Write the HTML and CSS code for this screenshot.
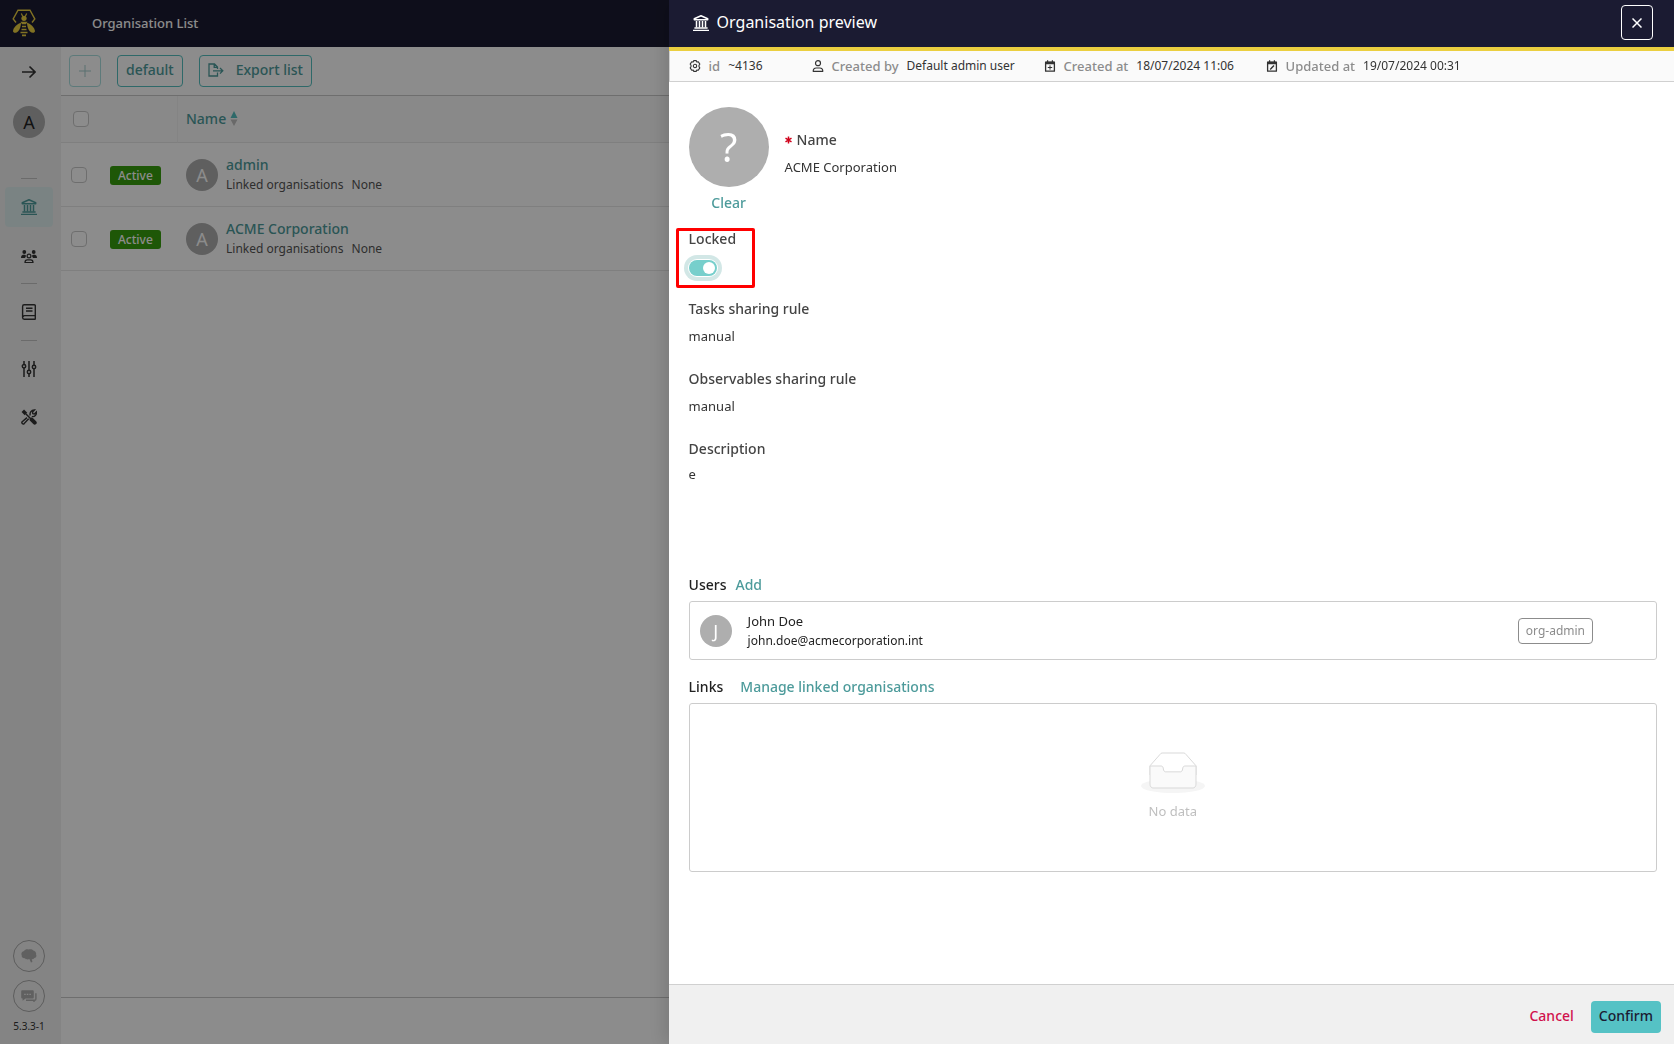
FILE: index.html
```html
<!DOCTYPE html>
<html lang="en">
<head>
<meta charset="utf-8">
<meta name="viewport" content="width=device-width, initial-scale=1">
<title>Organisation List</title>
<link rel="stylesheet" href="styles.css">
</head>
<body>
<svg class="sprite" aria-hidden="true">
  <symbol id="i-bank" viewBox="0 0 16 16">
    <path d="M8 .8 1.300 3.800v1h13.400v-1Z" fill="none" stroke="currentColor" stroke-width="1.500" stroke-linejoin="round"/>
    <path d="M3.500 6v6.500M6.500 6v6.500M9.500 6v6.500M12.500 6v6.500" stroke="currentColor" stroke-width="1.500"/>
    <path d="M1.400 13h13.200M0 15.300h16" stroke="currentColor" stroke-width="1.300"/>
  </symbol>
  <symbol id="i-calendar" viewBox="0 0 12 12">
    <path d="M1.600 2.200h8.800v9H1.600Z" fill="none" stroke="currentColor" stroke-width="1.300" stroke-linejoin="round"/>
    <path d="M1.400 1.800h9.200v2.400H1.400ZM3 .2h1.200v2H3ZM7.800.2H9v2H7.800Z" fill="currentColor"/>
  </symbol>
</svg>

<div class="app">
  <header class="topbar">
    <a class="logo" href="#" aria-label="Home">
      <svg width="24" height="28" viewBox="0 0 24 28" fill="none" stroke="currentColor" stroke-width="1.400">
        <path d="M4 13.500 1.200 10 6 1.200h12L22.800 10 20 13.500"/>
        <path d="m9.300 4.500 1.500 3m3.900-3-1.500 3" stroke-width="1.200"/>
        <circle cx="12" cy="9.300" r="2.600" fill="currentColor" stroke="none"/>
        <path d="M8.500 12.800h7l-1.500 2.400h-4Z" fill="currentColor" stroke="none"/>
        <path d="M9 13.800C5 15 1.500 18.500 1 22c0 2 3 2.500 5 .5 2-2 3-5.700 3-8.700ZM15 13.800c4 1.200 7.500 4.700 8 8.200 0 2-3 2.500-5 .5-2-2-3-5.700-3-8.700Z" fill="currentColor" stroke="none"/>
        <path d="M10 17.500h4M9.500 20.500h5M8.500 23.500h7M10 26.300h4" stroke-width="1.700"/>
      </svg>
    </a>
    <h1 class="topbar-title">Organisation List</h1>
  </header>

  <div class="workspace">
    <nav class="sidebar" aria-label="Main">
      <button class="side-item expand" type="button" aria-label="Expand menu">
        <svg width="14" height="14" viewBox="0 0 14 14" fill="none" stroke="currentColor" stroke-width="1.600"><path d="M0 7h13M7.500 1.500 13 7l-5.500 5.500"/></svg>
      </button>
      <span class="avatar avatar-me">A</span>
      <hr class="side-rule first">
      <a class="side-item active" href="#" aria-label="Organisations"><svg width="16" height="16"><use href="#i-bank"/></svg></a>
      <a class="side-item users" href="#" aria-label="Users">
        <svg width="16" height="14" viewBox="0 0 16 14" fill="currentColor">
          <circle cx="3.300" cy="2" r="1.900"/><circle cx="12.700" cy="2" r="1.900"/>
          <path d="M0 8c0-2 1-3.200 2.800-3.200 1.200 0 2.200.4 2.200 1.200L4 8ZM16 8c0-2-1-3.200-2.800-3.200-1.200 0-2.200.4-2.200 1.200l1 2Z"/>
          <circle cx="8" cy="6" r="1.900" fill="none" stroke="currentColor" stroke-width="1.200"/>
          <path d="M4 12.500c0-2 1-2.700 2.300-2.700h3.400c1.300 0 2.300.7 2.300 2.700Z" fill="none" stroke="currentColor" stroke-width="1.200"/>
        </svg>
      </a>
      <hr class="side-rule">
      <a class="side-item mid" href="#" aria-label="Templates">
        <svg width="16" height="16" viewBox="0 0 16 16" fill="none" stroke="currentColor" stroke-width="1.400">
          <path d="M14.300 11.500V1.800c0-.6-.4-1-1-1H3.200C2.200.8 1.600 1.500 1.600 2.500v11c0 1 .6 1.700 1.600 1.700h11.500M2 12.600c.3-.7 1-1 1.700-1h10.600v3.500M5 4.200h6.500M5 7h6.500"/>
        </svg>
      </a>
      <hr class="side-rule">
      <a class="side-item mid" href="#" aria-label="Entities">
        <svg width="16" height="16" viewBox="0 0 16 16" fill="none" stroke="currentColor" stroke-width="1.500">
          <path d="M3 0v3.500M3 7v9M8 0v9M8 13v3M13 0v4M13 8v8"/><circle cx="3" cy="5.200" r="1.700"/><circle cx="8" cy="11" r="1.700"/><circle cx="13" cy="6" r="1.700"/>
        </svg>
      </a>
      <a class="side-item" href="#" aria-label="Platform management">
        <svg width="16" height="16" viewBox="0 0 16 16" fill="none" stroke="currentColor">
          <path d="M1.800 1.800 5 5" stroke-width="3.500"/><path d="m5 5 5 5" stroke-width="1.500"/><path d="m10.700 10.700 3 3" stroke-width="4" stroke-linecap="round"/>
          <path d="m6 8.600-4.800 4.200c-1 1 .6 3 2 1.800l4.500-4.800M9.200 6.500c-.7-2.700 1-5.600 4.300-5.500l-2 2 .3 1.600 1.600.3 2-2c.4 3-1.700 5.200-4.600 4.600" stroke-width="1.400"/>
        </svg>
      </a>
      <div class="side-foot">
        <button class="round" type="button" aria-label="Insights">
          <svg width="16" height="14" viewBox="0 0 16 14" fill="currentColor"><path d="M3 2C4 .5 6 0 7.500.6 9-.3 11.500.2 12.300 1.500 14.500 2 15.600 4 15 5.500c1 1.500.2 3.300-1.600 3.500-.8 1-1.800 1.300-2.600 1.100l.6 3-1.400.4-1.600-3.400C6.500 10.800 4.500 10.500 4 9.300 1.800 9.600.3 8.200.8 6.400-.3 4.500.8 2.500 3 2Z"/></svg>
        </button>
        <button class="round" type="button" aria-label="Messages">
          <svg width="16" height="12" viewBox="0 0 16 12"><path d="M1.500.3h10c.8 0 1.300.5 1.300 1.200v5.700c0 .8-.5 1.300-1.300 1.300H4.600l-3 2.200V8.500C.7 8.500.2 8 .2 7.200V1.500C.2.800.7.300 1.500.300Z" fill="currentColor"/><path d="M5 10.200h8.500c.8 0 1.400-.5 1.400-1.300V3.200M13 10v2" fill="none" stroke="currentColor" stroke-width="1.400"/><path d="M3.200 4.400h1.500M5.800 4.400h1.500M8.400 4.400h1.500" stroke="#f0f0f0" stroke-width="1.400"/></svg>
        </button>
        <span class="version">5.3.3-1</span>
      </div>
    </nav>

    <main class="content">
      <div class="toolbar">
        <button class="btn square" type="button" aria-label="Add organisation" disabled>
          <svg width="12" height="12" viewBox="0 0 12 12" stroke="currentColor" stroke-width="1"><path d="M6 0v12M0 6h12"/></svg>
        </button>
        <button class="btn" type="button">default</button>
        <button class="btn export" type="button">
          <svg width="16" height="14" viewBox="0 0 16 14" fill="none" stroke="currentColor" stroke-width="1.300"><path d="M9.500 9.500V13H1V1h5.500l3 3v2M6.200 1v3.400h3M5 7.800h9.500M12 5l2.800 2.800L12 10.600"/></svg>
          Export list
        </button>
      </div>
      <table class="orgs">
        <thead>
          <tr>
            <th class="c-check"><input class="tick" type="checkbox" aria-label="Select all"></th>
            <th class="c-status"></th>
            <th class="c-name" scope="col"><span class="sort">Name
              <svg width="8" height="16" viewBox="0 0 8 16"><path d="M4 0 7.500 7h-7Z" fill="#55c0c0"/><path d="M4 15 7.500 8.500h-7Z" fill="#bfbfbf"/></svg></span></th>
          </tr>
        </thead>
        <tbody>
          <tr>
            <td class="c-check"><input class="tick" type="checkbox" aria-label="Select admin"></td>
            <td class="c-status"><span class="tag">Active</span></td>
            <td class="c-name"><div class="org"><span class="avatar">A</span><div><a class="org-name" href="#">admin</a><p class="org-links"><span>Linked organisations</span><span>None</span></p></div></div></td>
          </tr>
          <tr>
            <td class="c-check"><input class="tick" type="checkbox" aria-label="Select ACME Corporation"></td>
            <td class="c-status"><span class="tag">Active</span></td>
            <td class="c-name"><div class="org"><span class="avatar">A</span><div><a class="org-name" href="#">ACME Corporation</a><p class="org-links"><span>Linked organisations</span><span>None</span></p></div></div></td>
          </tr>
        </tbody>
      </table>
      <footer class="list-foot"></footer>
    </main>
  </div>
</div>

<div class="mask"></div>

<aside class="drawer" role="dialog" aria-labelledby="drawer-title">
  <header class="drawer-head">
    <svg width="16" height="16"><use href="#i-bank"/></svg>
    <h2 id="drawer-title">Organisation preview</h2>
    <button class="close" type="button" aria-label="Close">
      <svg width="10" height="10" viewBox="0 0 10 10" stroke="currentColor" stroke-width="1.500"><path d="m.5.500 9 9M9.500.500l-9 9"/></svg>
    </button>
  </header>
  <dl class="meta">
    <div class="meta-item">
      <svg width="12" height="12" viewBox="0 0 12 12" fill="none" stroke="currentColor" stroke-width="1.100"><path d="M4.700.6h2.600l.5 1.400 1.500-.2 1.500 2.300L10 5.200v1.600l.8 1.100-1.500 2.300-1.500-.2-.5 1.400H4.700L4.200 10l-1.500.2-1.500-2.300L2 6.800V5.200l-.8-1.100 1.500-2.300 1.500.2Z" stroke-linejoin="round"/><circle cx="6" cy="6" r="1.700"/></svg>
      <dt>id</dt><dd>~4136</dd>
    </div>
    <div class="meta-item">
      <svg width="12" height="12" viewBox="0 0 12 12" fill="none" stroke="currentColor" stroke-width="1.200"><circle cx="6" cy="3.200" r="2.500"/><path d="M1.200 11.300c0-2.300 1.300-3.300 3-3.300h3.600c1.700 0 3 1 3 3.300Z" stroke-linejoin="round"/></svg>
      <dt>Created by</dt><dd>Default admin user</dd>
    </div>
    <div class="meta-item">
      <svg width="12" height="12" viewBox="0 0 12 12" fill="none" stroke="currentColor"><use href="#i-calendar" stroke="none"/><path d="M6 5.300v4.400M3.800 7.500h4.400"/></svg>
      <dt>Created at</dt><dd>18/07/2024 11:06</dd>
    </div>
    <div class="meta-item">
      <svg width="12" height="12" viewBox="0 0 12 12" fill="none" stroke="currentColor"><use href="#i-calendar" stroke="none"/><path d="M4.200 9.400 8 5.600" stroke-width="1.400"/></svg>
      <dt>Updated at</dt><dd>19/07/2024 00:31</dd>
    </div>
  </dl>

  <div class="drawer-body">
    <section class="identity">
      <div class="portrait">
        <span class="avatar avatar-lg">?</span>
        <button class="link" type="button">Clear</button>
      </div>
      <div class="field">
        <h3 class="label"><svg class="required" width="7" height="8" viewBox="0 0 7 8" role="img" aria-label="required" stroke="currentColor" stroke-width="1.500"><path d="M3.500.500v7M.5 2.200l6 3.600M6.500 2.200l-6 3.600"/></svg>Name</h3>
        <p class="value">ACME Corporation</p>
      </div>
    </section>

    <div class="field locked">
      <label class="label" for="locked">Locked</label>
      <input class="switch" id="locked" type="checkbox" role="switch" checked>
    </div>
    <div class="field">
      <h3 class="label">Tasks sharing rule</h3>
      <p class="value">manual</p>
    </div>
    <div class="field">
      <h3 class="label">Observables sharing rule</h3>
      <p class="value">manual</p>
    </div>
    <div class="field description">
      <h3 class="label">Description</h3>
      <p class="value">e</p>
    </div>

    <section class="group">
      <div class="group-head"><h3>Users</h3><button class="link" type="button">Add</button></div>
      <div class="panel user">
        <span class="avatar">J</span>
        <div class="user-text"><p class="user-name">John Doe</p><p class="user-mail">john.doe@acmecorporation.int</p></div>
        <span class="role">org-admin</span>
      </div>
    </section>
    <section class="group">
      <div class="group-head wide"><h3>Links</h3><button class="link" type="button">Manage linked organisations</button></div>
      <div class="panel empty">
        <svg width="64" height="41" viewBox="0 0 64 41">
          <g transform="translate(0 1)" fill="none" fill-rule="evenodd">
            <ellipse cx="32" cy="33" rx="32" ry="7" fill="#f5f5f5"/>
            <g stroke="#d9d9d9">
              <path d="M55 12.760 44.854 1.258C44.367.474 43.656 0 42.907 0H21.093c-.749 0-1.460.474-1.947 1.257L9 12.761V22h46v-9.240z" fill="#fff"/>
              <path d="M41.613 15.931c0-1.605.994-2.930 2.227-2.931H55v18.137C55 33.260 53.680 35 52.050 35h-40.100C10.320 35 9 33.259 9 31.137V13h11.160c1.233 0 2.227 1.323 2.227 2.928v.022c0 1.605 1.005 2.901 2.237 2.901h14.752c1.232 0 2.237-1.308 2.237-2.913v-.007z" fill="#fafafa"/>
            </g>
          </g>
        </svg>
        <p>No data</p>
      </div>
    </section>
  </div>

  <footer class="drawer-foot">
    <button class="cancel" type="button">Cancel</button>
    <button class="confirm" type="button">Confirm</button>
  </footer>
</aside>
</body>
</html>
```
FILE: styles.css
```css
*, ::before, ::after { box-sizing: border-box; }

body {
  margin: 0;
  font: 13px/20px "Noto Sans", sans-serif;
  color: #333;
  background: #fff;
}

h1, h2, h3, p, dl, dd, hr { margin: 0; }
button { font: inherit; color: inherit; background: none; border: 0; padding: 0; cursor: pointer; }
a { color: inherit; text-decoration: none; }
svg { display: block; flex: none; }
.sprite { position: absolute; width: 0; height: 0; }

.app { display: flex; flex-direction: column; min-height: 100vh; }

.topbar { display: flex; align-items: center; height: 47px; background: #1b1b32; color: #fff; }
.logo { width: 61px; padding: 0 0 2px 12px; color: #ebcf40; }
.topbar-title { margin-left: 31px; padding-bottom: 2px; font-size: 13px; font-weight: 500; }

.workspace { display: flex; flex: 1; }

.sidebar { display: flex; flex-direction: column; align-items: center; width: 61px; padding: 0 7px 0 4px; background: #f0f0f0; }
.side-item { display: flex; align-items: center; justify-content: center; width: 48px; height: 40px; border-radius: 4px; color: #333; }
.side-item.expand { height: 50px; }
.side-item.active { background: #dfeeee; color: #4d9b9b; }
.side-item.users { margin-top: 10px; }
.side-item.mid { margin: 8px 0; }
.side-rule { width: 16px; height: 1px; border: 0; background: #c4c4c4; }
.side-rule.first { margin: 40px 0 8px; }
.users + .side-rule { margin-top: 6px; }
.side-foot { display: flex; flex-direction: column; align-items: center; gap: 8px; margin-top: auto; padding-bottom: 12px; }
.round { display: grid; place-items: center; width: 32px; height: 32px; border: 1px solid #aaa; border-radius: 50%; color: #b0b0b0; }
.version { font-size: 10px; line-height: 12px; }

.avatar { display: grid; place-items: center; flex: none; width: 32px; height: 32px; border-radius: 50%; background: #aeaeae; color: #fff; font-size: 18px; }
.avatar-me { margin-top: 9px; color: #222; }
.avatar-lg { width: 80px; height: 80px; font-size: 40px; line-height: 40px; }

.content { display: flex; flex-direction: column; flex: 1; background: #fff; }
.toolbar { display: flex; gap: 16px; padding: 8px; border-bottom: 1px solid #c8c8c8; }
.btn { display: flex; align-items: center; height: 32px; padding: 0 8px 2px; border: 1px solid #55c0c0; border-radius: 4px; color: #4d9b9b; font-size: 14px; font-weight: 500; }
.btn.square { width: 32px; justify-content: center; padding: 0; opacity: .5; }
.btn.export { gap: 12px; }

.orgs { width: 100%; table-layout: fixed; border-spacing: 0; }
.orgs th, .orgs td { padding: 0; border-bottom: 1px solid #e8e8e8; text-align: left; }
.orgs th { height: 47px; background: #fafafa; color: #4d9b9b; font-size: 14px; font-weight: 500; }
.orgs td { height: 64px; }
.orgs .c-check { width: 49px; padding-left: 10px; }
.orgs th.c-check { padding-left: 12px; }
.orgs .c-status { width: 68px; }
.orgs th.c-status { border-right: 1px solid #f0f0f0; }
.orgs .c-name { padding-left: 8px; }
.sort { display: flex; align-items: center; gap: 4px; }
.tick { appearance: none; display: block; width: 16px; height: 16px; margin: 0; border: 1px solid #c8c8c8; border-radius: 4px; background: #fff; }
.tag { display: inline-block; padding: 0 8px; border-radius: 3px; background: #389e0d; color: #fff; font-size: 12px; font-weight: 500; line-height: 19px; }
.org { display: flex; align-items: center; gap: 8px; }
.org-name { color: #4d9b9b; font-size: 14px; font-weight: 500; }
.org-links { display: flex; gap: 8px; color: #555; font-size: 12px; }

.list-foot { height: 47px; margin-top: auto; border-top: 1px solid #c8c8c8; }

.mask { position: fixed; inset: 0; background: rgba(0, 0, 0, .45); }

.drawer { position: fixed; top: 0; right: 0; bottom: 0; display: flex; flex-direction: column; width: calc(60% + 1px); background: #fff; box-shadow: -6px 0 16px rgba(0, 0, 0, .12); }
.drawer-head { display: flex; align-items: center; gap: 8px; height: 51px; padding: 0 21px 2px 24px; border-bottom: 4px solid #ebcf40; background: #1b1b32; color: #fff; }
.drawer-head h2 { padding-bottom: 2px; font-size: 16px; font-weight: 400; }
.close { display: grid; place-items: center; width: 32px; height: 35px; margin-left: auto; border: 1px solid #fff; border-radius: 4px; }

.meta { display: grid; grid-template-columns: 123px 232px 222px auto; align-items: center; height: 31px; padding-left: 19px; border: solid #d0d0d0; border-width: 0 0 1px 1px; background: #fafafa; font-size: 12px; }
.meta-item { display: flex; align-items: center; gap: 8px; white-space: nowrap; }
.meta-item dt { color: #8c8c8c; font-size: 13px; font-weight: 500; }

.drawer-body { flex: 1; overflow: auto; padding: 25px 17px 24px 20px; }
.identity { display: flex; gap: 16px; height: 122px; }
.portrait { display: flex; flex-direction: column; align-items: center; gap: 6px; }
.identity .field { padding-top: 23px; }
.link { color: #4d9b9b; font-size: 14px; font-weight: 500; }
.label { display: flex; align-items: center; gap: 5px; color: #444; font-size: 14px; font-weight: 500; line-height: 20px; }
.required { color: #d0021b; }
.value { margin-top: 7px; }
.field { height: 70px; }

.locked { position: relative; }
.locked::after { content: ""; position: absolute; top: -1px; left: -13px; width: 79px; height: 60px; border: 3px solid #f00; border-radius: 2px; pointer-events: none; }
.switch { appearance: none; display: flex; width: 28px; height: 16px; margin: 11px 0 0; padding: 2px; border-radius: 8px; background: #77cfcc; box-shadow: 0 0 0 1px #fff, 0 0 0 5px #d2e7e6; }
.switch::before { content: ""; width: 12px; height: 12px; margin-left: auto; border-radius: 50%; background: #fff; }
.description { height: 136px; }
.description .value { margin-top: 5px; }

.group { padding-bottom: 17px; }
.group-head { display: flex; gap: 9px; padding-bottom: 6px; }
.group-head.wide { gap: 17px; }
.group-head h3 { font-size: 14px; font-weight: 500; color: #222; }
.panel { border: 1px solid #ccc; border-radius: 3px; }
.user { display: flex; align-items: center; gap: 16px; height: 59px; padding: 0 63px 0 10px; color: #222; }
.user-mail { font-size: 12px; }
.role { margin-left: auto; padding: 2px 7px; border: 1px solid #8c8c8c; border-radius: 4px; color: #8c8c8c; font-size: 12px; }
.empty { display: flex; flex-direction: column; align-items: center; justify-content: center; gap: 8px; height: 169px; padding-bottom: 3px; color: #bfbfbf; }

.drawer-foot { display: flex; align-items: center; justify-content: flex-end; gap: 17px; height: 60px; padding: 5px 13px 0 0; border-top: 1px solid #d0d0d0; background: #f0f0f0; font-size: 14px; font-weight: 500; }
.cancel { padding-bottom: 2px; color: #d0104c; }
.confirm { height: 32px; padding: 0 8px 2px; border-radius: 4px; background: #55c2c5; color: #1b1b32; }
```
